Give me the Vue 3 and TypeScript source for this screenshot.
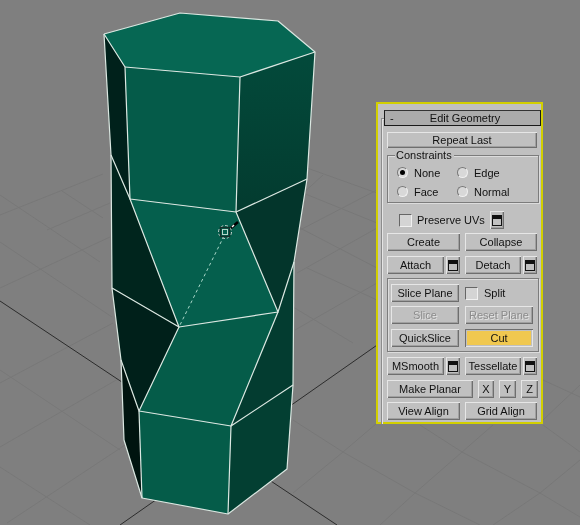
<script setup lang="ts">
type Face = { points: string; fill: string }

const faces: Face[] = [
  { points: '104,34 125,67 130,199 111,155', fill: '#00211b' },
  { points: '111,155 130,199 179,327 112,288', fill: '#00251d' },
  { points: '112,288 179,327 139,411 121,360', fill: '#00201a' },
  { points: '121,360 139,411 142,498 124,440', fill: '#00140f' },
  { points: '104,34 180,13 278,21 315,52 240,77 125,67', fill: '#066753' },
  { points: '125,67 240,77 236,212 130,199', fill: '#055b49' },
  { points: '240,77 315,52 307,179 236,212', fill: 'url(#rightTop)' },
  { points: '130,199 236,212 278,312 179,327', fill: '#055f4d' },
  { points: '236,212 307,179 294,262 278,312', fill: '#03352b' },
  { points: '278,312 294,262 293,385 231,426', fill: '#033c30' },
  { points: '179,327 278,312 231,426 139,411', fill: '#055c49' },
  { points: '139,411 231,426 228,514 142,498', fill: '#055c49' },
  { points: '231,426 293,385 287,469 228,514', fill: '#033f32' },
]

const edges: string[] = [
  '104,34 180,13 278,21 315,52 307,179 294,262 293,385 287,469 228,514 142,498 124,440 121,360 112,288 111,155 104,34',
  '125,67 240,77 315,52',
  '104,34 125,67 130,199 236,212 240,77',
  '236,212 307,179',
  '111,155 130,199 179,327 112,288',
  '236,212 278,312 294,262',
  '179,327 278,312 231,426 293,385',
  '179,327 139,411 121,360',
  '139,411 231,426 228,514',
  '139,411 142,498',
]

const gridLines: string[] = [
  '62,191 103,218', '0,195 100,262', '0,242 112,317', '0,370 120,450', '0,467 90,525',
  '0,215 103,174', '47,230 110,203', '0,288 110,237', '0,383 113,323', '0,447 118,379', '7,523 125,445',
  '300,196 323,175', '300,230 377,190', '297,273 377,228', '295,330 377,283',
  '307,168 377,193', '303,193 377,223', '300,228 377,268', '307,268 377,300', '293,307 353,343',
  '293,420 343,452 415,493 480,525', '420,425 462,452 540,493 580,517',
  '543,380 580,397', '543,425 580,452',
  '377,423 343,452 293,493', '493,425 415,493 380,525', '580,460 540,493 493,525', '580,385 543,420',
]
</script>

<template>
  <main class="viewport">
    <svg class="scene" width="580" height="525" viewBox="0 0 580 525">
      <defs>
        <linearGradient id="rightTop" x1="0" y1="0" x2="0" y2="1">
          <stop offset="0" stop-color="#034a3b" />
          <stop offset="1" stop-color="#033b2f" />
        </linearGradient>
      </defs>
      <polyline v-for="l in gridLines" :key="l" :points="l" fill="none" stroke="#787878" />
      <line x1="0" y1="301" x2="337" y2="525" stroke="#2c2c2c" />
      <line x1="120" y1="525" x2="400" y2="329" stroke="#2c2c2c" />
      <polygon v-for="f in faces" :key="f.points" :points="f.points" :fill="f.fill" />
      <polyline v-for="e in edges" :key="e" :points="e" fill="none" stroke="#dbe8e2" stroke-width="1.2" stroke-linejoin="round" />
      <line x1="224" y1="236" x2="179" y2="327" stroke="#a9d6c8" stroke-dasharray="3 3" />
      <line x1="231" y1="228" x2="238" y2="222" stroke="#000" stroke-width="2.5" />
      <line x1="232" y1="227" x2="234" y2="225" stroke="#fff" stroke-width="1.5" />
      <g fill="none">
        <circle cx="225" cy="232" r="6.5" stroke="#cfd8d4" stroke-dasharray="3 2" />
        <rect x="220.5" y="227.5" width="9" height="9" stroke="#15302a" stroke-width="1.5" />
        <rect x="222.5" y="229.5" width="5" height="5" stroke="#b8d8cc" />
      </g>
    </svg>

    <section class="panel">
      <div class="rollout">
        <div class="title"><span>-</span><span>Edit Geometry</span></div>

        <button class="btn repeat">Repeat Last</button>

        <div class="group constraints">
          <span class="group-label">Constraints</span>
          <label class="opt"><i class="radio on"></i>None</label>
          <label class="opt"><i class="radio"></i>Edge</label>
          <label class="opt"><i class="radio"></i>Face</label>
          <label class="opt"><i class="radio"></i>Normal</label>
        </div>

        <div class="preserve">
          <i class="check"></i>
          <span>Preserve UVs</span>
          <button class="btn win">
            <svg width="10" height="11" viewBox="0 0 10 11"><rect x=".5" y=".5" width="9" height="10" fill="#c0c0c0" stroke="#111" /><rect x="1" y="1" width="8" height="3" fill="#111" /></svg>
          </button>
        </div>

        <div class="row two tight">
          <button class="btn">Create</button>
          <button class="btn">Collapse</button>
        </div>

        <div class="row two">
          <div class="pair">
            <button class="btn">Attach</button>
            <button class="btn win">
              <svg width="10" height="11" viewBox="0 0 10 11"><rect x=".5" y=".5" width="9" height="10" fill="#c0c0c0" stroke="#111" /><rect x="1" y="1" width="8" height="3" fill="#111" /></svg>
            </button>
          </div>
          <div class="pair">
            <button class="btn">Detach</button>
            <button class="btn win">
              <svg width="10" height="11" viewBox="0 0 10 11"><rect x=".5" y=".5" width="9" height="10" fill="#c0c0c0" stroke="#111" /><rect x="1" y="1" width="8" height="3" fill="#111" /></svg>
            </button>
          </div>
        </div>

        <div class="group slices">
          <button class="btn">Slice Plane</button>
          <label class="opt split"><i class="check"></i>Split</label>
          <button class="btn off">Slice</button>
          <button class="btn off">Reset Plane</button>
          <button class="btn">QuickSlice</button>
          <button class="btn cut"><span>Cut</span></button>
        </div>

        <div class="row two">
          <div class="pair">
            <button class="btn">MSmooth</button>
            <button class="btn win">
              <svg width="10" height="11" viewBox="0 0 10 11"><rect x=".5" y=".5" width="9" height="10" fill="#c0c0c0" stroke="#111" /><rect x="1" y="1" width="8" height="3" fill="#111" /></svg>
            </button>
          </div>
          <div class="pair">
            <button class="btn">Tessellate</button>
            <button class="btn win">
              <svg width="10" height="11" viewBox="0 0 10 11"><rect x=".5" y=".5" width="9" height="10" fill="#c0c0c0" stroke="#111" /><rect x="1" y="1" width="8" height="3" fill="#111" /></svg>
            </button>
          </div>
        </div>

        <div class="row planar">
          <button class="btn">Make Planar</button>
          <button class="btn">X</button>
          <button class="btn">Y</button>
          <button class="btn">Z</button>
        </div>

        <div class="row two tight">
          <button class="btn">View Align</button>
          <button class="btn">Grid Align</button>
        </div>
      </div>
    </section>
  </main>
</template>

<style>
html, body {
  margin: 0;
  background: #7f7f7f;
}
</style>

<style scoped>
.viewport {
  position: relative;
  width: 580px;
  height: 525px;
  overflow: hidden;
  background: #7f7f7f;
}

.scene {
  display: block;
  filter: blur(0.35px);
}

.panel {
  position: absolute;
  left: 376px;
  top: 102px;
  width: 167px;
  height: 322px;
  box-sizing: border-box;
  border: 2px solid #d2cf00;
  background: #c0c0c0;
  padding: 6px 0 0 3px;
  font: 11px "Liberation Sans", Arial, sans-serif;
  color: #111;
  filter: blur(0.3px);
}

.rollout {
  position: relative;
  display: flex;
  flex-direction: column;
  gap: 5px;
  height: 100%;
  padding-left: 6px;
  box-sizing: border-box;
}

.rollout::before {
  content: "";
  position: absolute;
  left: 0;
  top: 8px;
  bottom: -2px;
  width: 3px;
  border-left: 1px solid #8c8c8c;
  border-top: 1px solid #8c8c8c;
  box-shadow: inset 1px 1px 0 #e4e4e4;
}

.title {
  display: grid;
  grid-template-columns: 1fr auto 1fr;
  align-items: center;
  height: 16px;
  box-sizing: border-box;
  width: 157px;
  margin-left: -3px;
  padding-left: 5px;
  border: 1px solid #1a1a1a;
  border-top-color: #333;
  background: #ababab;
  position: relative;
  line-height: 14px;
}

.btn {
  display: flex;
  align-items: center;
  justify-content: center;
  height: 18px;
  min-width: 0;
  padding: 0;
  box-sizing: border-box;
  border: 0;
  border-radius: 0;
  background: #c0c0c0;
  color: #111;
  font: inherit;
  white-space: nowrap;
  box-shadow: inset 1px 1px 0 #e6e6e6, inset -1px -1px 0 #6e6e6e, inset -2px -2px 0 #a0a0a0;
}

.repeat {
  width: 150px;
  height: 16px;
  margin-top: 1px;
}

.group {
  position: relative;
  box-sizing: border-box;
  width: 152px;
  border: 1px solid #7c7c7c;
  box-shadow: inset 1px 1px 0 #dcdcdc, 1px 1px 0 #dcdcdc;
}

.group-label {
  position: absolute;
  left: 7px;
  top: -7px;
  line-height: 13px;
  padding: 0 2px 0 1px;
  background: #c0c0c0;
}

.constraints {
  display: grid;
  grid-template-columns: 60px 60px;
  grid-auto-rows: 19px;
  align-items: center;
  height: 48px;
  margin-top: 2px;
  padding: 7px 0 0 9px;
}

.opt {
  display: flex;
  align-items: center;
  gap: 6px;
}

.radio {
  display: block;
  width: 11px;
  height: 11px;
  box-sizing: border-box;
  border-radius: 50%;
  border: 1px solid;
  border-color: #777 #f0f0f0 #f0f0f0 #777;
  background: #d8d8d8;
  position: relative;
}

.radio.on::after {
  content: "";
  position: absolute;
  left: 2px;
  top: 2px;
  width: 5px;
  height: 5px;
  border-radius: 50%;
  background: #000;
}

.check {
  display: block;
  flex: none;
  width: 13px;
  height: 13px;
  box-sizing: border-box;
  border: 1px solid;
  border-color: #666 #f0f0f0 #f0f0f0 #666;
  background: #d4d4d4;
}

.preserve {
  display: flex;
  align-items: center;
  gap: 5px;
  width: 150px;
  height: 18px;
  margin-top: 3px;
  padding-left: 12px;
  box-sizing: border-box;
}

.preserve .win {
  flex: none;
  margin-left: auto;
  margin-right: 33px;
}

.win {
  flex: none;
  width: 14px;
}

.row {
  display: grid;
  width: 150px;
}

.two {
  grid-template-columns: 73px 72px;
  column-gap: 5px;
}

.tight {
  margin-top: -1px;
}

.pair {
  display: flex;
  gap: 2px;
}

.pair .btn:first-child {
  flex: 1;
}

.planar {
  grid-template-columns: 86px 16px 17px 17px;
  column-gap: 5px;
  width: 151px;
}

.slices {
  display: grid;
  grid-template-columns: 68px 68px;
  gap: 4px 6px;
  height: 74px;
  margin-top: -1px;
  padding: 5px 5px 4px 3px;
}

.split {
  gap: 6px;
}

.off {
  color: #8c8c8c;
  text-shadow: 1px 1px 0 #e4e4e4;
}

.cut {
  padding: 2px;
  box-shadow: inset 1px 1px 0 #6e6e6e, inset -1px -1px 0 #e6e6e6;
}

.cut span {
  display: flex;
  align-items: center;
  justify-content: center;
  width: 100%;
  height: 100%;
  background: #f0c850;
}
</style>
